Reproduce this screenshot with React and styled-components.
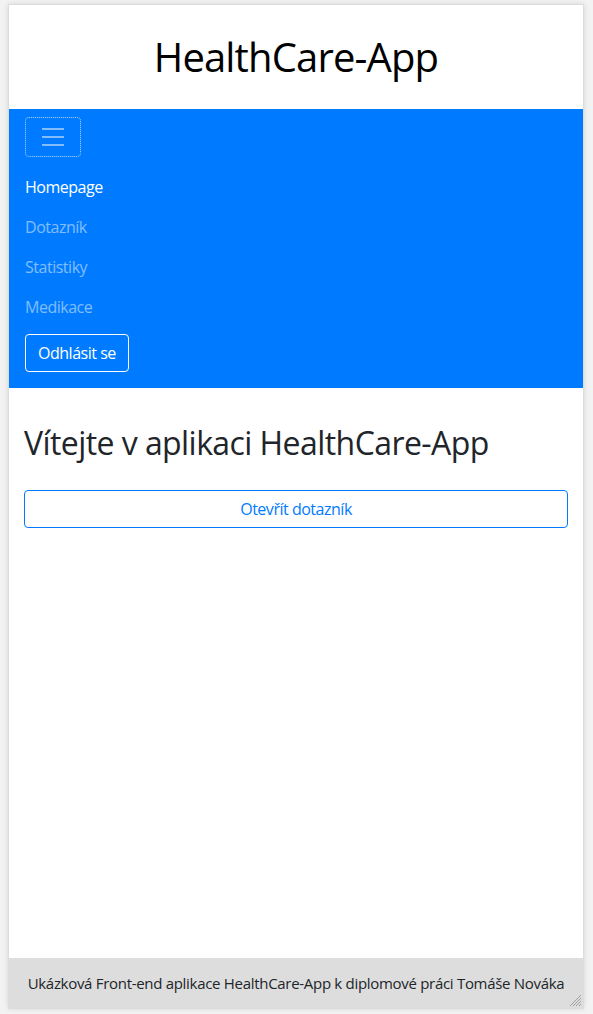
import React from "react";
import styled, { createGlobalStyle } from "styled-components";

const GlobalStyle = createGlobalStyle`
  html, body {
    margin: 0;
    padding: 0;
    background: #f3f3f3;
  }
  body {
    font-family: "Open Sans", "Noto Sans", "Liberation Sans", sans-serif;
    font-size: 16px;
    line-height: 1.5;
    color: #212529;
    letter-spacing: -0.48px;
  }
  * { box-sizing: border-box; }
`;

const Page = styled.div`
  padding: 4px 9px 5px 8px;
`;

const Frame = styled.div`
  position: relative;
  width: 576px;
  height: 1005px;
  background: #fff;
  border: 1px solid #dcdcdc;
  box-shadow: 0 0 6px rgba(0, 0, 0, 0.12);
  display: flex;
  flex-direction: column;
  overflow: hidden;
`;

const Header = styled.header`
  padding: 28px 0 28px;
  text-align: center;
`;

const Title = styled.h1`
  margin: 0;
  font-size: 40px;
  font-weight: 400;
  line-height: 48px;
  letter-spacing: -0.85px;
  color: #000;
`;

const Navbar = styled.nav`
  background: #007bff;
  padding: 8px 16px;
  display: flex;
  flex-direction: column;
  align-items: flex-start;
`;

const Toggler = styled.button`
  width: 56px;
  height: 40px;
  padding: 0;
  background: transparent;
  border: 1px solid rgba(255, 255, 255, 0.1);
  outline: 1px dotted rgba(255, 255, 255, 0.55);
  outline-offset: -1px;
  border-radius: 4px;
  display: flex;
  align-items: center;
  justify-content: center;
  cursor: pointer;
`;

const NavList = styled.ul`
  list-style: none;
  margin: 10px 0 0;
  padding: 0;
  display: flex;
  flex-direction: column;
`;

const NavItem = styled.li`
  display: block;
`;

const NavLink = styled.a`
  display: block;
  padding: 8px 0;
  line-height: 24px;
  font-size: 16px;
  text-decoration: none;
  color: ${(p) => (p.$active ? "#fff" : "rgba(255, 255, 255, 0.5)")};
`;

const LogoutButton = styled.button`
  margin: 7px 0 8px;
  height: 38px;
  padding: 6px 12px;
  font-family: inherit;
  font-size: 16px;
  letter-spacing: inherit;
  line-height: 24px;
  color: #fff;
  background: transparent;
  border: 1px solid #fff;
  border-radius: 4px;
`;

const Main = styled.main`
  flex: 1;
  padding: 36px 15px 0;
`;

const Heading = styled.h2`
  margin: 0 0 28px;
  font-size: 32px;
  font-weight: 400;
  line-height: 38px;
  letter-spacing: -0.57px;
  color: #212529;
`;

const OutlineButton = styled.button`
  display: block;
  width: 100%;
  height: 38px;
  padding: 6px 12px;
  font-family: inherit;
  font-size: 16px;
  letter-spacing: inherit;
  line-height: 24px;
  color: #007bff;
  background: transparent;
  border: 1px solid #007bff;
  border-radius: 4px;
  text-align: center;
`;

const Footer = styled.footer`
  height: 50px;
  background: #dddddd;
  display: flex;
  align-items: center;
  justify-content: center;
  font-size: 15px;
  letter-spacing: -0.3px;
  color: #212529;
`;

const Grip = styled.svg`
  position: absolute;
  right: 1px;
  bottom: 1px;
  width: 13px;
  height: 13px;
  pointer-events: none;
`;

const HamburgerIcon = () => (
  <svg width="30" height="30" viewBox="0 0 30 30" aria-hidden="true">
    <path
      d="M4 7h22M4 15h22M4 23h22"
      stroke="rgba(255,255,255,0.5)"
      strokeWidth="2"
      strokeMiterlimit="10"
      fill="none"
    />
  </svg>
);

const ResizeGrip = () => (
  <Grip viewBox="0 0 13 13" aria-hidden="true">
    <path
      d="M12 1L1 12M12 4L4 12M12 7L7 12M12 10L10 12"
      stroke="#a0a0a0"
      strokeWidth="1"
      fill="none"
    />
  </Grip>
);

const links = [
  { label: "Homepage", active: true },
  { label: "Dotazník" },
  { label: "Statistiky" },
  { label: "Medikace" },
];

export default function App() {
  return (
    <>
      <GlobalStyle />
      <Page>
        <Frame>
          <Header>
            <Title>HealthCare-App</Title>
          </Header>
          <Navbar>
            <Toggler aria-label="Toggle navigation">
              <HamburgerIcon />
            </Toggler>
            <NavList>
              {links.map((l) => (
                <NavItem key={l.label}>
                  <NavLink href="#" $active={l.active}>
                    {l.label}
                  </NavLink>
                </NavItem>
              ))}
            </NavList>
            <LogoutButton>Odhlásit se</LogoutButton>
          </Navbar>
          <Main>
            <Heading>Vítejte v aplikaci HealthCare-App</Heading>
            <OutlineButton>Otevřít dotazník</OutlineButton>
          </Main>
          <Footer>
            Ukázková Front-end aplikace HealthCare-App k diplomové práci Tomáše Nováka
          </Footer>
          <ResizeGrip />
        </Frame>
      </Page>
    </>
  );
}
